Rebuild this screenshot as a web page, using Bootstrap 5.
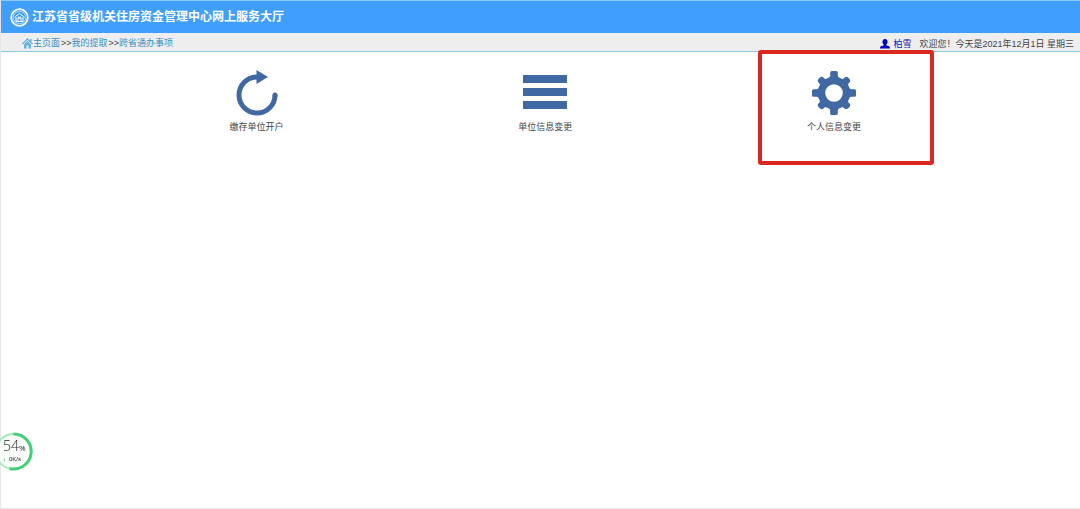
<!DOCTYPE html>
<html lang="zh-CN">
<head>
<meta charset="utf-8">
<meta name="viewport" content="width=device-width, initial-scale=1">
<title>江苏省省级机关住房资金管理中心网上服务大厅</title>
<link href="https://cdn.jsdelivr.net/npm/bootstrap@5.3.0/dist/css/bootstrap.min.css" rel="stylesheet">
<style>
  body { font-family: "Liberation Sans", "Noto Sans CJK SC", sans-serif; font-size: 9px; line-height: 12px; color: #444; background: #fff; }
  .page { border: 1px solid #e6e6e8; border-top-color: #8ccaf5; border-right: 0; }
  .topbar { background: #409eff; height: 32px; padding-left: 9px; gap: 3px; }
  .topbar h1 { font-size: 12px; line-height: 16px; color: #fff; }
  .crumbs { background: #eee; height: 19px; padding: 0 6px 0 21px; border-bottom: 1px solid #93c8e2; }
  .crumbs nav { padding-top: 2px; }
  .crumbs nav a { color: #3c8fc0; }
  .crumbs nav span { padding-left: 1px; }
  .welcome { gap: 8px; padding-top: 4px; }
  .user { color: #1616b4; gap: 3px; }
  .services { width: 80.3%; margin-left: 10.3%; padding-top: 18px; }
  .tile { color: #444; gap: 5px; }
  .tile svg { fill: #4069a4; }
  .highlight { left: calc(50% - 76px); top: -20px; width: 176px; height: 115px; border: 4px solid #d9281f; border-radius: 3px; pointer-events: none; }
  .meter { left: -6px; bottom: 38px; width: 39px; height: 39px; }
  .meter-text { padding-left: 9px; }
  .pct { font-family: "Open Sans", sans-serif; font-weight: 300; font-size: 14px; line-height: 14px; color: #222; }
  .pct small { font-size: 8px; font-weight: 400; }
  .rate { font-size: 6px; line-height: 9px; gap: 3px; color: #222; }
  .rate i { color: #1faa50; font-style: normal; font-weight: 700; }
</style>
</head>
<body>
<div class="page d-flex flex-column min-vh-100">
  <header class="topbar d-flex align-items-center">
    <svg width="19" height="19" viewBox="0 0 19 19" fill="none" stroke="#fff" aria-hidden="true">
      <circle cx="9.500" cy="9.500" r="8.300" stroke-width="1.800"/>
      <circle cx="9.500" cy="9.500" r="6.300" stroke-width=".6"/>
      <path d="M4.500 9.300 9.500 5.300l5 4M6 9v4.500h7V9M8 13v-3h3v3M8 9.300h3" stroke-width="1"/>
    </svg>
    <h1 class="fw-bold mb-0">江苏省省级机关住房资金管理中心网上服务大厅</h1>
  </header>

  <div class="crumbs d-flex justify-content-between align-items-center">
    <nav class="d-flex align-items-center" aria-label="当前位置">
      <svg width="11" height="11" viewBox="0 0 22 22" fill="#65b3dc" aria-hidden="true">
        <path d="M11 0 0 11l2 2 9-9 9 9 2-2-3-3V2h-3v3z"/>
        <path d="m11 6-7 7v8h5v-6h4v6h5v-8z"/>
      </svg>
      <a href="#" class="text-decoration-none">主页面</a>
      <span>&gt;&gt;</span>
      <a href="#" class="text-decoration-none">我的提取</a>
      <span>&gt;&gt;</span>
      <a href="#" class="text-decoration-none">跨省通办事项</a>
    </nav>
    <div class="welcome d-flex align-items-center">
      <a href="#" class="user d-flex align-items-center text-decoration-none">
        <svg width="10" height="10" viewBox="0 0 20 20" fill="#0000c8" aria-hidden="true">
          <path d="M10 0c3.500 0 5 2.500 5 5.500 0 2.500-1 4.500-2.500 5.500v1.500l5.500 2c1.500.7 2 2.500 2 4.500H0c0-2 .5-3.800 2-4.500l5.500-2V11C6 10 5 8 5 5.500 5 2.500 6.500 0 10 0z"/>
        </svg>
        <span>柏雪</span>
      </a>
      <span>欢迎您！今天是2021年12月1日 星期三</span>
    </div>
  </div>

  <main class="services">
    <div class="row g-0 text-center">
      <div class="col-4">
        <a href="#" class="tile d-flex flex-column align-items-center text-decoration-none">
          <svg width="46" height="46" viewBox="0 0 46 46" aria-hidden="true">
            <path d="M23 7A18 18 0 1 0 41 25" fill="none" stroke="#4069a4" stroke-width="5"/>
            <circle cx="41" cy="25" r="2.500"/>
            <path d="M22.500 0 34 7 22.500 14z"/>
          </svg>
          <span>缴存单位开户</span>
        </a>
      </div>
      <div class="col-4">
        <a href="#" class="tile d-flex flex-column align-items-center text-decoration-none">
          <svg width="46" height="46" viewBox="0 0 46 46" aria-hidden="true">
            <path d="M1 5h44v8H1zM1 18h44v8H1zM1 31h44v8H1z"/>
          </svg>
          <span>单位信息变更</span>
        </a>
      </div>
      <div class="col-4 position-relative">
        <a href="#" class="tile d-flex flex-column align-items-center text-decoration-none">
          <svg width="46" height="46" viewBox="-23 -23 46 46" aria-hidden="true">
            <defs>
              <path id="tooth" d="M-6-14.500Q-3.800-15.500-3.800-17.500V-20.500Q-3.800-22-2.300-22H2.300Q3.800-22 3.800-20.500V-17.500Q3.800-15.500 6-14.500z"/>
              <path id="corner-tooth" d="M-6-14Q-3.500-15.500-3.500-17.500V-18.500Q-3.500-21 0-21T3.500-18.500V-17.500Q3.500-15.500 6-14z"/>
            </defs>
            <circle r="12.500" fill="none" stroke="#4069a4" stroke-width="7.400"/>
            <use href="#tooth"/><use href="#tooth" transform="rotate(90)"/>
            <use href="#tooth" transform="rotate(180)"/><use href="#tooth" transform="rotate(270)"/>
            <use href="#corner-tooth" transform="rotate(45)"/><use href="#corner-tooth" transform="rotate(135)"/>
            <use href="#corner-tooth" transform="rotate(225)"/><use href="#corner-tooth" transform="rotate(315)"/>
          </svg>
          <span>个人信息变更</span>
        </a>
        <div class="highlight position-absolute"></div>
      </div>
    </div>
  </main>
</div>

<div class="meter position-fixed">
  <svg class="position-absolute top-0 start-0" width="39" height="39" viewBox="0 0 39 39" fill="none" aria-hidden="true">
    <circle cx="19.500" cy="19.500" r="17.500" fill="#fbfffc" stroke="#a9e8be" stroke-width="2"/>
    <path d="M19.500 2a17.500 17.500 0 1 1-4 34.500" stroke="#45cf75" stroke-width="3"/>
  </svg>
  <div class="meter-text position-relative d-flex flex-column h-100 justify-content-center">
    <div class="pct">54<small>%</small></div>
    <div class="rate d-flex"><i>↓</i><span>0K/s</span></div>
  </div>
</div>
<script src="https://cdn.jsdelivr.net/npm/bootstrap@5.3.0/dist/js/bootstrap.bundle.min.js"></script>
</body>
</html>
